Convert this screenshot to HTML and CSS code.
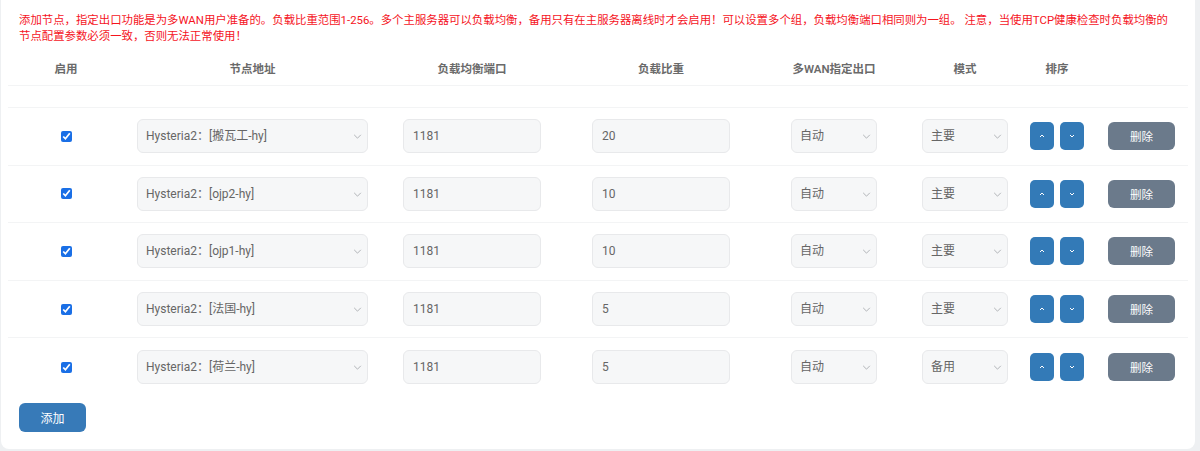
FILE: index.html
```html
<!DOCTYPE html>
<html lang="zh-CN">
<head>
<meta charset="utf-8">
<title>负载均衡节点</title>
<link rel="stylesheet" href="styles.css">
</head>
<body>
<div class="card">
  <p class="notice">添加节点，指定出口功能是为多WAN用户准备的。负载比重范围1-256。多个主服务器可以负载均衡，备用只有在主服务器离线时才会启用！可以设置多个组，负载均衡端口相同则为一组。 注意，当使用TCP健康检查时负载均衡的节点配置参数必须一致，否则无法正常使用！</p>
  <div class="table">
    <div class="row head">
      <div class="cell">启用</div>
      <div class="cell">节点地址</div>
      <div class="cell">负载均衡端口</div>
      <div class="cell">负载比重</div>
      <div class="cell">多WAN指定出口</div>
      <div class="cell">模式</div>
      <div class="cell">排序</div>
      <div class="cell"></div>
    </div>
    <div class="row spacer"></div>

    <div class="row data">
      <div class="cell"><input type="checkbox" class="chk" checked></div>
      <div class="cell"><div class="sel sel-node"><select><option>Hysteria2：[搬瓦工-hy]</option></select><svg class="chev" viewBox="0 0 10 6"><path d="M1 1l4 4 4-4"/></svg></div></div>
      <div class="cell"><input class="txt" type="text" value="1181"></div>
      <div class="cell"><input class="txt" type="text" value="20"></div>
      <div class="cell"><div class="sel sel-small"><select><option>自动</option></select><svg class="chev" viewBox="0 0 10 6"><path d="M1 1l4 4 4-4"/></svg></div></div>
      <div class="cell"><div class="sel sel-small"><select><option>主要</option></select><svg class="chev" viewBox="0 0 10 6"><path d="M1 1l4 4 4-4"/></svg></div></div>
      <div class="cell sort"><button class="btn btn-sort"><svg viewBox="0 0 6 4"><path d="M1 3l2-2 2 2"/></svg></button><button class="btn btn-sort"><svg viewBox="0 0 6 4"><path d="M1 1l2 2 2-2"/></svg></button></div>
      <div class="cell"><button class="btn btn-del">删除</button></div>
    </div>

    <div class="row data">
      <div class="cell"><input type="checkbox" class="chk" checked></div>
      <div class="cell"><div class="sel sel-node"><select><option>Hysteria2：[ojp2-hy]</option></select><svg class="chev" viewBox="0 0 10 6"><path d="M1 1l4 4 4-4"/></svg></div></div>
      <div class="cell"><input class="txt" type="text" value="1181"></div>
      <div class="cell"><input class="txt" type="text" value="10"></div>
      <div class="cell"><div class="sel sel-small"><select><option>自动</option></select><svg class="chev" viewBox="0 0 10 6"><path d="M1 1l4 4 4-4"/></svg></div></div>
      <div class="cell"><div class="sel sel-small"><select><option>主要</option></select><svg class="chev" viewBox="0 0 10 6"><path d="M1 1l4 4 4-4"/></svg></div></div>
      <div class="cell sort"><button class="btn btn-sort"><svg viewBox="0 0 6 4"><path d="M1 3l2-2 2 2"/></svg></button><button class="btn btn-sort"><svg viewBox="0 0 6 4"><path d="M1 1l2 2 2-2"/></svg></button></div>
      <div class="cell"><button class="btn btn-del">删除</button></div>
    </div>

    <div class="row data">
      <div class="cell"><input type="checkbox" class="chk" checked></div>
      <div class="cell"><div class="sel sel-node"><select><option>Hysteria2：[ojp1-hy]</option></select><svg class="chev" viewBox="0 0 10 6"><path d="M1 1l4 4 4-4"/></svg></div></div>
      <div class="cell"><input class="txt" type="text" value="1181"></div>
      <div class="cell"><input class="txt" type="text" value="10"></div>
      <div class="cell"><div class="sel sel-small"><select><option>自动</option></select><svg class="chev" viewBox="0 0 10 6"><path d="M1 1l4 4 4-4"/></svg></div></div>
      <div class="cell"><div class="sel sel-small"><select><option>主要</option></select><svg class="chev" viewBox="0 0 10 6"><path d="M1 1l4 4 4-4"/></svg></div></div>
      <div class="cell sort"><button class="btn btn-sort"><svg viewBox="0 0 6 4"><path d="M1 3l2-2 2 2"/></svg></button><button class="btn btn-sort"><svg viewBox="0 0 6 4"><path d="M1 1l2 2 2-2"/></svg></button></div>
      <div class="cell"><button class="btn btn-del">删除</button></div>
    </div>

    <div class="row data">
      <div class="cell"><input type="checkbox" class="chk" checked></div>
      <div class="cell"><div class="sel sel-node"><select><option>Hysteria2：[法国-hy]</option></select><svg class="chev" viewBox="0 0 10 6"><path d="M1 1l4 4 4-4"/></svg></div></div>
      <div class="cell"><input class="txt" type="text" value="1181"></div>
      <div class="cell"><input class="txt" type="text" value="5"></div>
      <div class="cell"><div class="sel sel-small"><select><option>自动</option></select><svg class="chev" viewBox="0 0 10 6"><path d="M1 1l4 4 4-4"/></svg></div></div>
      <div class="cell"><div class="sel sel-small"><select><option>主要</option></select><svg class="chev" viewBox="0 0 10 6"><path d="M1 1l4 4 4-4"/></svg></div></div>
      <div class="cell sort"><button class="btn btn-sort"><svg viewBox="0 0 6 4"><path d="M1 3l2-2 2 2"/></svg></button><button class="btn btn-sort"><svg viewBox="0 0 6 4"><path d="M1 1l2 2 2-2"/></svg></button></div>
      <div class="cell"><button class="btn btn-del">删除</button></div>
    </div>

    <div class="row data last">
      <div class="cell"><input type="checkbox" class="chk" checked></div>
      <div class="cell"><div class="sel sel-node"><select><option>Hysteria2：[荷兰-hy]</option></select><svg class="chev" viewBox="0 0 10 6"><path d="M1 1l4 4 4-4"/></svg></div></div>
      <div class="cell"><input class="txt" type="text" value="1181"></div>
      <div class="cell"><input class="txt" type="text" value="5"></div>
      <div class="cell"><div class="sel sel-small"><select><option>自动</option></select><svg class="chev" viewBox="0 0 10 6"><path d="M1 1l4 4 4-4"/></svg></div></div>
      <div class="cell"><div class="sel sel-small"><select><option>备用</option></select><svg class="chev" viewBox="0 0 10 6"><path d="M1 1l4 4 4-4"/></svg></div></div>
      <div class="cell sort"><button class="btn btn-sort"><svg viewBox="0 0 6 4"><path d="M1 3l2-2 2 2"/></svg></button><button class="btn btn-sort"><svg viewBox="0 0 6 4"><path d="M1 1l2 2 2-2"/></svg></button></div>
      <div class="cell"><button class="btn btn-del">删除</button></div>
    </div>
  </div>
  <button class="btn btn-add">添加</button>
</div>
</body>
</html>
```

FILE: styles.css
```css
html, body {
  margin: 0;
  padding: 0;
  background: #eef0f2;
}

body {
  font-family: Roboto, "Noto Sans CJK SC", sans-serif;
  font-size: 11.5px;
  color: #555;
}

.card {
  width: 1180px;
  margin-left: 1px;
  padding: 12px 7px 17px;
  background: #fff;
  border-radius: 0 0 8px 8px;
}

.notice {
  margin: 0 13px 6px 11px;
  color: #f5141e;
  line-height: 16px;
  font-size: 11.4px;
}

.table {
  width: 1180px;
}

.row {
  display: grid;
  grid-template-columns: 116px 257px 182px 196px 150px 112px 72px 95px;
  align-items: center;
  box-sizing: border-box;
}

.cell {
  display: flex;
  justify-content: center;
  align-items: center;
}

.head {
  height: 36px;
  border-bottom: 1px solid #f3f4f5;
  font-weight: 600;
  color: #6a6a6a;
  font-size: 11.5px;
}

.spacer {
  height: 22px;
  border-bottom: 1px solid #f3f4f5;
}

.data {
  height: 57.6px;
  border-bottom: 1px solid #f3f4f5;
}

.data.last {
  border-bottom: none;
}

.chk {
  margin: 0;
  width: 11px;
  height: 11px;
  accent-color: #1a6fe6;
}

.txt,
.sel select {
  box-sizing: border-box;
  height: 34px;
  margin: 0;
  background: #f6f7f8;
  border: 1px solid #e8e9eb;
  border-radius: 6px;
  color: #666;
  font-family: Roboto, "Noto Sans CJK SC", sans-serif;
  font-size: 12px;
  outline: none;
}

.txt {
  width: 138px;
  padding: 0 9px;
}

.sel {
  position: relative;
}

.sel select {
  appearance: none;
  -webkit-appearance: none;
  width: 100%;
  padding: 0 24px 0 8px;
}

.sel-node {
  width: 231px;
}

.sel-small {
  width: 86px;
}

.chev {
  position: absolute;
  right: 6px;
  top: 15px;
  width: 9px;
  height: 5px;
  fill: none;
  stroke: #a3a7ab;
  stroke-width: 1;
}

.btn {
  border: none;
  margin: 0;
  padding: 0;
  color: #fff;
  font-family: Roboto, "Noto Sans CJK SC", sans-serif;
  cursor: pointer;
}

.sort {
  gap: 6px;
}

.btn-sort {
  width: 24px;
  height: 28px;
  border-radius: 5px;
  background: #337ab7;
  display: flex;
  align-items: center;
  justify-content: center;
}

.btn-sort svg {
  width: 6px;
  height: 4px;
  fill: none;
  stroke: #fff;
  stroke-width: 1;
}

.btn-del {
  width: 67px;
  height: 28px;
  border-radius: 6px;
  background: #6b7a8b;
  font-size: 11.5px;
  margin-left: 2px;
}

.btn-add {
  display: block;
  width: 67px;
  height: 29px;
  margin: 7px 0 0 11px;
  border-radius: 6px;
  background: #377ab8;
  font-size: 12px;
}
```
